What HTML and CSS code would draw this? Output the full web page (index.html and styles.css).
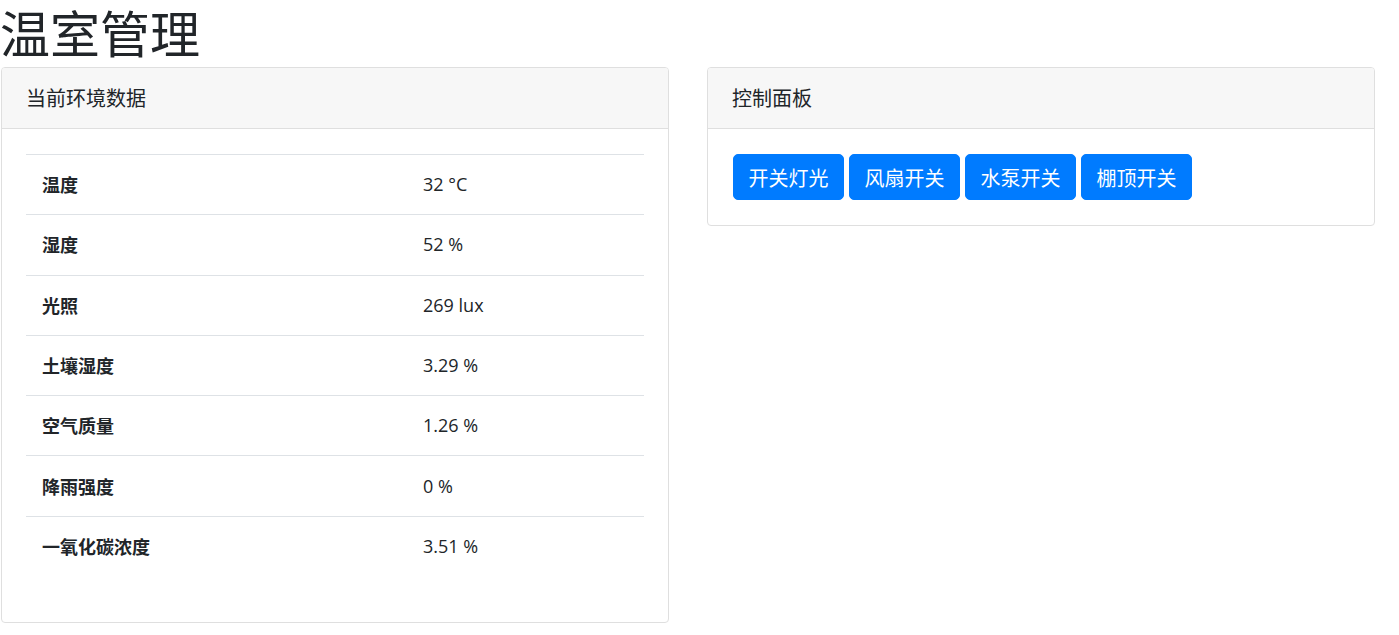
FILE: index.html
```html
<!DOCTYPE html>
<html lang="zh-CN">
<head>
<meta charset="utf-8">
<title>温室管理</title>
<link rel="stylesheet" href="styles.css">
</head>
<body>
<h1 class="title">温室管理</h1>
<div class="row">
  <div class="card card-left">
    <div class="card-header">当前环境数据</div>
    <div class="card-body">
      <table class="data-table">
        <colgroup><col class="col-name"><col></colgroup>
        <tbody>
          <tr><th>温度</th><td>32 °C</td></tr>
          <tr><th>湿度</th><td>52 %</td></tr>
          <tr><th>光照</th><td>269 lux</td></tr>
          <tr><th>土壤湿度</th><td>3.29 %</td></tr>
          <tr><th>空气质量</th><td>1.26 %</td></tr>
          <tr><th>降雨强度</th><td>0 %</td></tr>
          <tr><th>一氧化碳浓度</th><td>3.51 %</td></tr>
        </tbody>
      </table>
    </div>
  </div>
  <div class="card card-right">
    <div class="card-header">控制面板</div>
    <div class="card-body buttons">
      <button class="btn">开关灯光</button>
      <button class="btn">风扇开关</button>
      <button class="btn">水泵开关</button>
      <button class="btn">棚顶开关</button>
    </div>
  </div>
</div>
</body>
</html>
```

FILE: styles.css
```css
html, body {
  margin: 0;
  padding: 0;
  background: #fff;
}
body {
  font-family: "Open Sans", "Noto Sans CJK SC", sans-serif;
  color: #212529;
  font-size: 18px;
}
.title {
  margin: 0;
  padding-top: 2px;
  font-size: 50px;
  font-weight: 400;
  line-height: 58px;
  font-family: "Noto Sans CJK SC", sans-serif;
}
.row {
  display: flex;
  align-items: flex-start;
  gap: 38px;
  padding-left: 1px;
  margin-top: 7px;
}
.card {
  width: 668px;
  box-sizing: border-box;
  border: 1px solid #dfdfdf;
  border-radius: 4px;
  background: #fff;
}
.card-header {
  background: #f7f7f7;
  border-bottom: 1px solid #dfdfdf;
  padding: 15px 24px;
  font-size: 20px;
  line-height: 30px;
  font-family: "Noto Sans CJK SC", sans-serif;
  border-radius: 3px 3px 0 0;
}
.card-body {
  padding: 25px 24px 30px;
}
.data-table {
  width: 100%;
  border-collapse: collapse;
  table-layout: fixed;
  margin-bottom: 16px;
}
.col-name {
  width: 381px;
}
.data-table th,
.data-table td {
  border-top: 1px solid #dee2e6;
  padding: 16px;
  height: 27.3px;
  line-height: 27px;
  text-align: left;
  vertical-align: middle;
}
.data-table th {
  font-weight: 700;
  font-family: "Noto Sans CJK SC", sans-serif;
}
.data-table td {
  font-weight: 400;
}
.buttons {
  display: flex;
  gap: 5px;
  padding: 25px;
}
.btn {
  background: #007bff;
  color: #fff;
  border: 1px solid #007bff;
  border-radius: 5px;
  font-family: "Noto Sans CJK SC", sans-serif;
  font-size: 20px;
  line-height: 29px;
  padding: 7.5px 14.5px;
  margin: 0;
}
```
